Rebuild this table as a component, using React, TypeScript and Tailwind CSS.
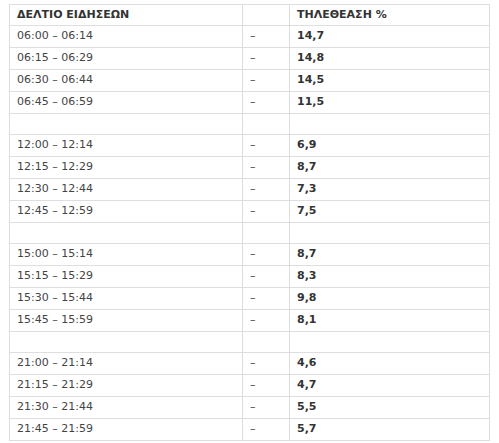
const groups: [string, string][][] = [
  [
    ['06:00 – 06:14', '14,7'],
    ['06:15 – 06:29', '14,8'],
    ['06:30 – 06:44', '14,5'],
    ['06:45 – 06:59', '11,5'],
  ],
  [
    ['12:00 – 12:14', '6,9'],
    ['12:15 – 12:29', '8,7'],
    ['12:30 – 12:44', '7,3'],
    ['12:45 – 12:59', '7,5'],
  ],
  [
    ['15:00 – 15:14', '8,7'],
    ['15:15 – 15:29', '8,3'],
    ['15:30 – 15:44', '9,8'],
    ['15:45 – 15:59', '8,1'],
  ],
  [
    ['21:00 – 21:14', '4,6'],
    ['21:15 – 21:29', '4,7'],
    ['21:30 – 21:44', '5,5'],
    ['21:45 – 21:59', '5,7'],
  ],
]

const cell = 'border border-[#dedede] px-[7px] py-0 align-middle'

export default function App() {
  return (
    <div className="min-h-screen bg-white pl-[9px] pt-[4px] font-['DejaVu_Sans',Verdana,sans-serif] text-[11px] text-[#444]">
      <table className="border-collapse table-fixed w-[480px]">
        <colgroup>
          <col className="w-[233px]" />
          <col className="w-[47px]" />
          <col className="w-[200px]" />
        </colgroup>
        <tbody>
          <tr className="h-[21px] text-[11px] font-bold text-[#333]">
            <td className={cell}>ΔΕΛΤΙΟ ΕΙΔΗΣΕΩΝ</td>
            <td className={cell}></td>
            <td className={cell}>ΤΗΛΕΘΕΑΣΗ %</td>
          </tr>
          {groups.map((rows, gi) => (
            <>
              {gi > 0 && (
                <tr key={'b' + gi} className="h-[21px]">
                  <td className={cell}></td>
                  <td className={cell}></td>
                  <td className={cell}></td>
                </tr>
              )}
              {rows.map(([time, value]) => (
                <tr key={time} className="h-[22px]">
                  <td className={cell}>{time}</td>
                  <td className={cell}>–</td>
                  <td className={cell + ' font-bold text-[#333]'}>{value}</td>
                </tr>
              ))}
            </>
          ))}
        </tbody>
      </table>
    </div>
  )
}
